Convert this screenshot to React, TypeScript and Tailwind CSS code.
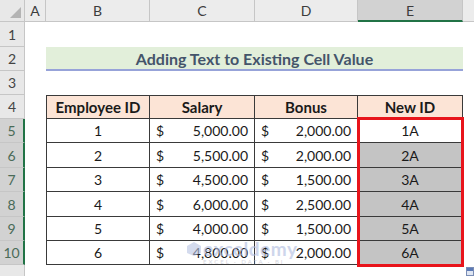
import React from "react";

const rows = [
  { id: "1", salary: "5,000.00", bonus: "2,000.00", nid: "1A" },
  { id: "2", salary: "5,500.00", bonus: "2,000.00", nid: "2A" },
  { id: "3", salary: "4,500.00", bonus: "1,500.00", nid: "3A" },
  { id: "4", salary: "6,000.00", bonus: "2,500.00", nid: "4A" },
  { id: "5", salary: "4,000.00", bonus: "1,500.00", nid: "5A" },
  { id: "6", salary: "4,800.00", bonus: "2,000.00", nid: "6A" },
];

const cols = ["A", "B", "C", "D", "E"];

function RowHead({ n, sel }: { n: string; sel?: boolean }) {
  return (
    <div
      className={
        sel
          ? "col-start-1 flex items-center justify-center border-b border-[#c6c6c6] border-r-2 border-r-[#217346] bg-[#d2d2d2] text-[14px] text-[#4a6b58]"
          : "col-start-1 flex items-center justify-center border-b border-r border-[#c6c6c6] bg-[#e8e8e8] text-[14px] text-[#444]"
      }
    >
      {n}
    </div>
  );
}

export default function App() {
  return (
    <div className="relative h-[276px] w-[474px] overflow-hidden bg-white font-['Lato',sans-serif] text-[#1a1a1a]">
      <div className="grid grid-cols-[25px_21px_104px_105px_103px_105px_11px] grid-rows-[22px_25px_24px_24px_24px_24px_25px_24px_25px_24px_24px_11px]">
        {/* corner */}
        <div className="relative border-b border-r border-[#c6c6c6] bg-[#e8e8e8]">
          <svg className="absolute bottom-[3px] right-[3px]" width="11" height="11" viewBox="0 0 11 11">
            <polygon points="11,0 11,11 0,11" fill="#b4b4b4" />
          </svg>
        </div>
        {cols.map((c) => (
          <div
            key={c}
            className={
              c === "E"
                ? "flex items-center justify-center border-b-2 border-r border-b-[#217346] border-r-[#c6c6c6] bg-[#d2d2d2] text-[14px] text-[#3c3c3c]"
                : "flex items-center justify-center border-b border-r border-[#c6c6c6] bg-[#ececec] text-[14px] text-[#3c3c3c]"
            }
          >
            {c}
          </div>
        ))}
        <div className="border-b border-[#c6c6c6] bg-[#ececec]" />

        {/* row 1 */}
        <RowHead n="1" />
        <div className="col-span-6" />

        {/* row 2 title */}
        <RowHead n="2" />
        <div />
        <div className="col-span-4 flex items-center justify-center border-b-2 border-[#97a3d9] bg-[#e2efda] pt-[1px] text-[16px] font-bold text-[#44546a]">
          Adding Text to Existing Cell Value
        </div>
        <div />

        {/* row 3 */}
        <RowHead n="3" />
        <div className="col-span-6" />

        {/* row 4 header */}
        <RowHead n="4" />
        <div />
        {["Employee ID", "Salary", "Bonus", "New ID"].map((h, i) => (
          <div
            key={h}
            className={
              "flex items-center justify-center border-y border-r border-[#3a3a3a] bg-[#fce4d6] text-[15px] font-bold" +
              (i === 0 ? " border-l" : "")
            }
          >
            {h}
          </div>
        ))}
        <div />

        {rows.map((r, i) => (
          <React.Fragment key={r.id}>
            <RowHead n={String(i + 5)} sel />
            <div />
            <div className="flex items-center justify-center border-b border-x border-[#3a3a3a] text-[14px]">{r.id}</div>
            <div className="flex items-center justify-between border-b border-r border-[#3a3a3a] pl-[6px] pr-[6px] text-[14px]">
              <span>$</span>
              <span>{r.salary}</span>
            </div>
            <div className="flex items-center justify-between border-b border-r border-[#3a3a3a] pl-[6px] pr-[6px] text-[14px]">
              <span>$</span>
              <span>{r.bonus}</span>
            </div>
            <div
              className={
                "flex items-center justify-center border-b border-r border-[#3a3a3a] text-[14px] " +
                (i === 0 ? "bg-white" : "bg-[#c4c4c4]")
              }
            >
              {r.nid}
            </div>
            <div />
          </React.Fragment>
        ))}

        {/* row 11 partial */}
        <div className="col-start-1 border-r border-[#c6c6c6] bg-[#e8e8e8]" />
      </div>

      {/* selection outline */}
      <div className="pointer-events-none absolute left-[357px] top-[117px] h-[150px] w-[107px] border-[3px] border-[#e8141b]" />

      {/* watermark */}
      <div className="pointer-events-none absolute left-[186px] top-[239px] flex items-start gap-[1px] opacity-60">
        <svg width="16" height="16" viewBox="0 0 16 16" className="mt-[2px]">
          <polygon points="8,1 15,5 15,12 8,15 1,12 1,5" fill="#b8c4e4" />
        </svg>
        <div className="flex flex-col leading-none">
          <span className="text-[19px] font-bold tracking-[0.5px] text-[#aebbe0]">exceldemy</span>
          <span className="mt-[1px] text-[6px] tracking-[2px] text-[#b9b9c9]">EXCEL · DATA · BI</span>
        </div>
      </div>

      {/* quick analysis icon */}
      <div className="absolute left-[466px] top-[267px] h-[9px] w-[8px] border border-[#7a8db5] bg-[#dfe6f3]">
        <div className="h-[3px] w-full bg-[#5b79b5]" />
      </div>
    </div>
  );
}
